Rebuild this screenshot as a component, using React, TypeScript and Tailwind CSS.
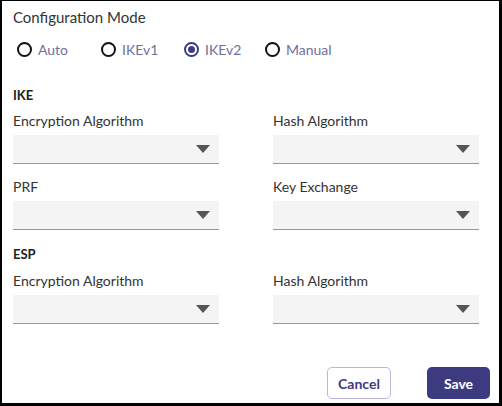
import { useState } from "react";

const modes = ["Auto", "IKEv1", "IKEv2", "Manual"];

function SelectField({ label }: { label: string }) {
  return (
    <div className="flex flex-col">
      <label className="h-5 leading-5 text-[14px] text-[#333333]">{label}</label>
      <div className="mt-[4px] h-[29px] bg-[#f4f4f4] border-b border-[#5aa9dc] flex items-center justify-end pr-[9px]">
        {/* caret */}
        <svg width="14" height="8" viewBox="0 0 14 8">
          <path d="M0 0 H14 L7 8 Z" fill="#555555" />
        </svg>
      </div>
    </div>
  );
}

export default function App() {
  const [mode, setMode] = useState("IKEv2");

  return (
    <div
      className="w-[502px] h-[406px] bg-white border-t border-l-2 border-r-[3px] border-b-[3px] border-black flex flex-col text-[#333333]"
      style={{ fontFamily: "Lato, 'Open Sans', sans-serif" }}
    >
      <div className="pl-[11px] pr-[20px] pt-[6px] flex-1">
        <h2 className="h-5 leading-5 text-[15px] text-[#333333]">Configuration Mode</h2>

        {/* Mode radios */}
        <div className="mt-[12px] h-5 flex items-center">
          {modes.map((m) => (
            <button
              key={m}
              onClick={() => setMode(m)}
              className={`flex items-center gap-[6px] ${m === "Auto" ? "ml-[4px] w-[84px]" : m === "IKEv1" ? "w-[83px]" : m === "IKEv2" ? "w-[81px]" : ""}`}
            >
              {mode === m ? (
                <span className="w-[15px] h-[15px] rounded-full border-2 border-[#3d3b80] flex items-center justify-center">
                  <span className="w-[7px] h-[7px] rounded-full bg-[#3d3b80]" />
                </span>
              ) : (
                <span className="w-[15px] h-[15px] rounded-full border-2 border-[#111111]" />
              )}
              <span className="text-[14px] text-[#716f9e]">{m}</span>
            </button>
          ))}
        </div>

        <h3 className="mt-[26px] h-5 leading-5 text-[13px] font-bold text-[#222222]">IKE</h3>
        <div className="mt-[6px] grid grid-cols-[206px_206px] gap-x-[54px] gap-y-[13px]">
          <SelectField label="Encryption Algorithm" />
          <SelectField label="Hash Algorithm" />
          <SelectField label="PRF" />
          <SelectField label="Key Exchange" />
        </div>

        <h3 className="mt-[14px] h-5 leading-5 text-[13px] font-bold text-[#222222]">ESP</h3>
        <div className="mt-[7px] grid grid-cols-[206px_206px] gap-x-[54px]">
          <SelectField label="Encryption Algorithm" />
          <SelectField label="Hash Algorithm" />
        </div>
      </div>

      {/* Footer actions */}
      <div className="flex justify-end gap-[36px] pr-[9px] pb-[4px]">
        <button className="w-[64px] h-[32px] rounded-[5px] border border-[#b9b6e0] text-[#3d3b80] text-[14px] font-bold">
          Cancel
        </button>
        <button className="w-[63px] h-[32px] rounded-[5px] bg-[#3d3b80] text-white text-[14px] font-bold">
          Save
        </button>
      </div>
    </div>
  );
}
